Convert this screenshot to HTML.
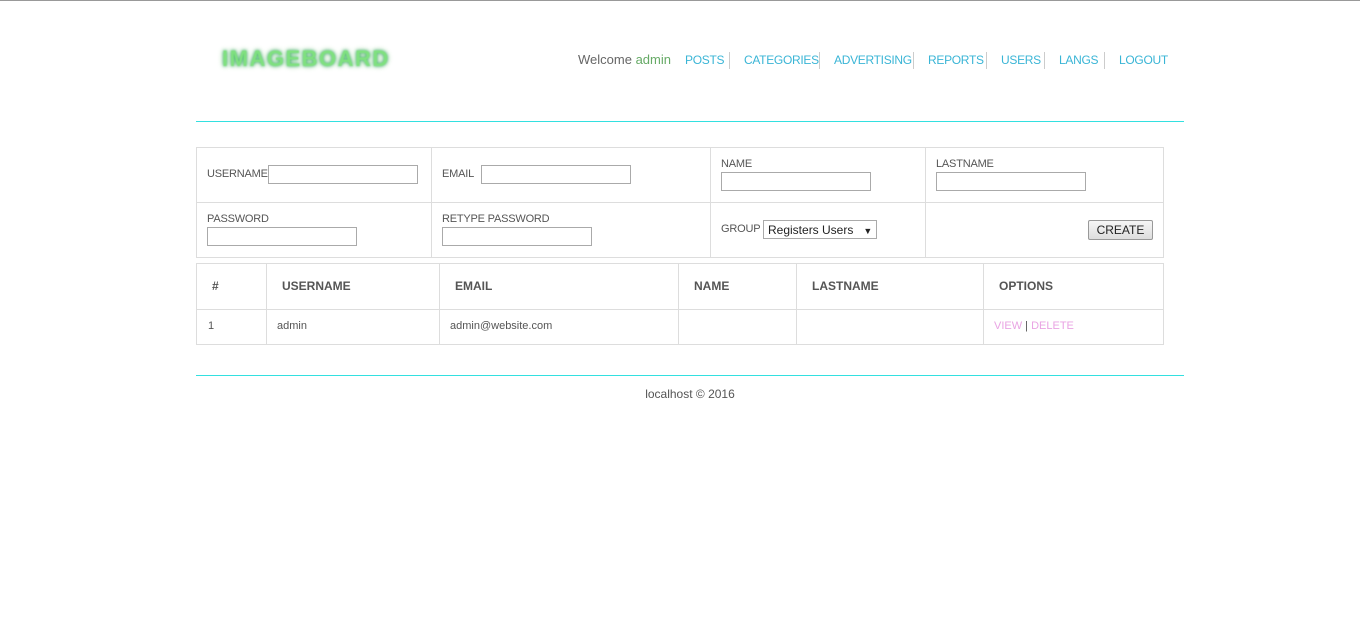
<!DOCTYPE html>
<html><head><style>
body{margin:0;width:1360px;height:644px;background:#fff;font-family:"Liberation Sans",sans-serif;color:#555;position:relative;overflow:hidden;font-size:12px}
.a{position:absolute}
.top{left:0;top:0;width:1360px;height:1px;background:#999}
.logo{left:222px;top:46px;font:bold 22px "Liberation Sans",sans-serif;color:#7fe07f;letter-spacing:1.5px;text-shadow:0 0 3px #3a6,0 0 6px #9c9;filter:blur(0.5px)}
.nav{top:53px;font-size:12px;color:#3ab5d6;white-space:nowrap;letter-spacing:-0.3px}
.hr{left:196px;width:988px;height:0;border-top:1px solid #33e0e0}
.cell{position:absolute;border:1px solid #ddd;box-sizing:border-box}
input.t{position:absolute;height:19px;border:1px solid #aaa;box-sizing:border-box;width:150px}
.lbl{position:absolute;font-size:11px;color:#555;letter-spacing:-0.2px}
.th{position:absolute;font-weight:bold;font-size:12px;color:#555}
.td{position:absolute;font-size:11px;color:#555}
</style></head><body>
<div class="a top"></div>
<div class="a logo">IMAGEBOARD</div>
<div class="a nav" style="left:578px;color:#666;font-size:13px;top:52px;letter-spacing:0">Welcome <span style="color:#6a6">admin</span></div>
<div class="a nav" style="left:685px">POSTS</div>
<div class="a" style="left:729px;top:52px;width:1px;height:17px;background:#ccc"></div>
<div class="a nav" style="left:744px">CATEGORIES</div>
<div class="a" style="left:819px;top:52px;width:1px;height:17px;background:#ccc"></div>
<div class="a nav" style="left:834px">ADVERTISING</div>
<div class="a" style="left:913px;top:52px;width:1px;height:17px;background:#ccc"></div>
<div class="a nav" style="left:928px">REPORTS</div>
<div class="a" style="left:986px;top:52px;width:1px;height:17px;background:#ccc"></div>
<div class="a nav" style="left:1001px">USERS</div>
<div class="a" style="left:1044px;top:52px;width:1px;height:17px;background:#ccc"></div>
<div class="a nav" style="left:1059px">LANGS</div>
<div class="a" style="left:1104px;top:52px;width:1px;height:17px;background:#ccc"></div>
<div class="a nav" style="left:1119px">LOGOUT</div>
<div class="a hr" style="top:121px"></div>

<div class="cell" style="left:196px;top:147px;width:236px;height:56px"></div>
<div class="cell" style="left:431px;top:147px;width:280px;height:56px"></div>
<div class="cell" style="left:710px;top:147px;width:216px;height:56px"></div>
<div class="cell" style="left:925px;top:147px;width:239px;height:56px"></div>
<div class="cell" style="left:196px;top:202px;width:236px;height:56px"></div>
<div class="cell" style="left:431px;top:202px;width:280px;height:56px"></div>
<div class="cell" style="left:710px;top:202px;width:216px;height:56px"></div>
<div class="cell" style="left:925px;top:202px;width:239px;height:56px"></div>

<div class="lbl" style="left:207px;top:168px">USERNAME</div><input class="t" style="left:268px;top:165px">
<div class="lbl" style="left:442px;top:168px">EMAIL</div><input class="t" style="left:481px;top:165px">
<div class="lbl" style="left:721px;top:158px">NAME</div><input class="t" style="left:721px;top:172px">
<div class="lbl" style="left:936px;top:158px">LASTNAME</div><input class="t" style="left:936px;top:172px">
<div class="lbl" style="left:207px;top:213px">PASSWORD</div><input class="t" style="left:207px;top:227px">
<div class="lbl" style="left:442px;top:213px">RETYPE PASSWORD</div><input class="t" style="left:442px;top:227px">
<div class="lbl" style="left:721px;top:223px">GROUP</div>
<div class="a" style="left:763px;top:220px;width:114px;height:19px;border:1px solid #aaa;box-sizing:border-box;font:12px 'Liberation Sans',sans-serif;color:#222;padding:2px 4px;white-space:nowrap">Registers Users&nbsp;&nbsp; <span style="font-size:9px">▼</span></div>
<div class="a" style="left:1088px;top:220px;width:65px;height:20px;border:1px solid #999;border-radius:2px;box-sizing:border-box;background:linear-gradient(#f6f6f6,#ddd);font:12px 'Liberation Sans',sans-serif;color:#222;text-align:center;line-height:18px">CREATE</div>

<div class="cell" style="left:196px;top:263px;width:71px;height:47px"></div>
<div class="cell" style="left:266px;top:263px;width:174px;height:47px"></div>
<div class="cell" style="left:439px;top:263px;width:240px;height:47px"></div>
<div class="cell" style="left:678px;top:263px;width:119px;height:47px"></div>
<div class="cell" style="left:796px;top:263px;width:188px;height:47px"></div>
<div class="cell" style="left:983px;top:263px;width:181px;height:47px"></div>
<div class="cell" style="left:196px;top:309px;width:71px;height:36px"></div>
<div class="cell" style="left:266px;top:309px;width:174px;height:36px"></div>
<div class="cell" style="left:439px;top:309px;width:240px;height:36px"></div>
<div class="cell" style="left:678px;top:309px;width:119px;height:36px"></div>
<div class="cell" style="left:796px;top:309px;width:188px;height:36px"></div>
<div class="cell" style="left:983px;top:309px;width:181px;height:36px"></div>
<div class="th" style="left:212px;top:279px">#</div>
<div class="th" style="left:282px;top:279px">USERNAME</div>
<div class="th" style="left:455px;top:279px">EMAIL</div>
<div class="th" style="left:694px;top:279px">NAME</div>
<div class="th" style="left:812px;top:279px">LASTNAME</div>
<div class="th" style="left:999px;top:279px">OPTIONS</div>
<div class="td" style="left:208px;top:320px">1</div>
<div class="td" style="left:277px;top:320px">admin</div>
<div class="td" style="left:450px;top:320px">admin@website.com</div>
<div class="td" style="left:994px;top:320px;color:#e9a3e3">VIEW <span style="color:#555">|</span> DELETE</div>

<div class="a hr" style="top:375px"></div>
<div class="a" style="left:0;width:1380px;text-align:center;top:387px;font-size:12px;color:#555">localhost © 2016</div>
</body></html>
